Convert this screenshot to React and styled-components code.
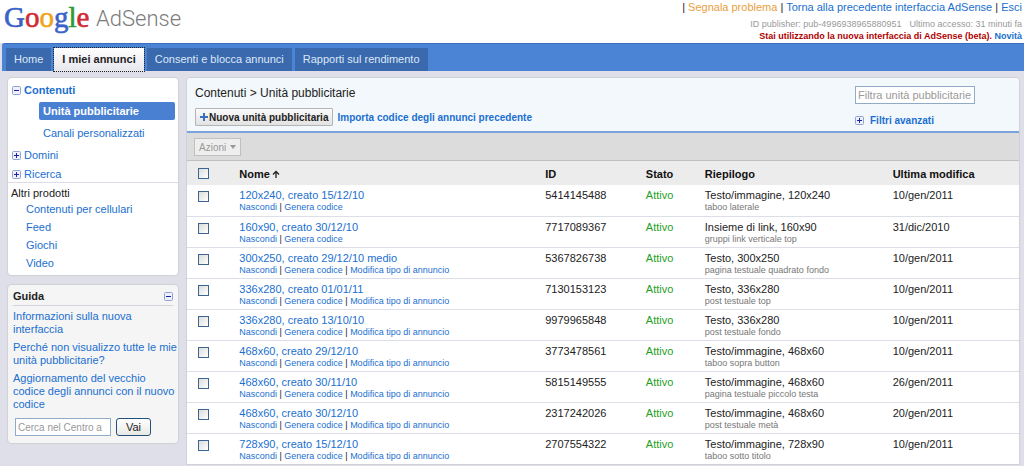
import React, { useState } from 'react';
import styled, { createGlobalStyle } from 'styled-components';

const GlobalStyle = createGlobalStyle`
  * {
    box-sizing: border-box;
  }
  body {
    margin: 0;
    background-color: #dfdfe9;
    color: #222;
    font-family: "Liberation Sans", Arial, sans-serif;
    font-size: 11px;
    line-height: 13px;
  }
  a {
    color: #1a6fd0;
    text-decoration: none;
  }
  button, input {
    font-family: inherit;
    font-size: 11px;
    margin: 0;
  }
`;

const Header = styled.header`
  display: flex;
  justify-content: space-between;
  height: 43px;
  padding: 0 2px 0 4px;
  background-color: #fff;
`;

const Logo = styled.svg`
  display: block;
  flex: none;
`;

const Account = styled.div`
  text-align: right;
  white-space: nowrap;
`;

const AccountLinks = styled.div`
  height: 18px;
  line-height: 15px;
`;

const ReportLink = styled.a`
  color: #e8a040;
`;

const AccountInfo = styled.div`
  color: #999;
  font-size: 9px;
  line-height: 12px;

  span + span {
    margin-left: 8px;
  }
`;

const BetaNote = styled.div`
  color: #b00000;
  font-size: 9px;
  font-weight: bold;
  line-height: 12px;
`;

const Nav = styled.nav`
  display: flex;
  gap: 3px;
  height: 28px;
  margin-left: 2px;
  padding: 4px 4px 0;
  background-color: #4b83d5;
  border-top: 1px solid #3a6fc0;
  border-radius: 3px 0 0 0;
`;

const Tab = styled.a`
  padding: 0 8px;
  line-height: 23px;
  color: ${({ $active }) => ($active ? '#222' : '#dce8f8')};
  font-weight: ${({ $active }) => ($active ? 'bold' : 'normal')};
  background: ${({ $active }) => ($active ? 'linear-gradient(#fff, #e6e6ee)' : '#3b69ad')};
  outline: ${({ $active }) => ($active ? '1px dotted #222' : 'none')};
`;

const Page = styled.div`
  display: flex;
  align-items: flex-start;
  gap: 9px;
  padding: 7px 5px 2px 8px;
`;

const Sidebar = styled.aside`
  flex: none;
  width: 170px;
`;

const Panel = styled.div`
  border-radius: 4px;
  background-color: ${({ $tinted }) => ($tinted ? '#f5f5f5' : '#fff')};
  box-shadow: 0 0 1px 1px #d0d0d8;
  margin-bottom: 10px;
`;

const TreeList = styled.ul`
  margin: 0;
  padding: 3px 3px 0 4px;
  height: 105px;
  list-style: none;
  border-bottom: 1px solid #dcdce4;
`;

const TreeItem = styled.li`
  display: flex;
  align-items: center;
  gap: 3px;
  height: 19px;
  font-weight: ${({ $bold }) => ($bold ? 'bold' : 'normal')};
`;

const SubItem = styled.li`
  margin-left: 27px;
  padding: 3px 0 6px 4px;
`;

const SelectedItem = styled.li`
  margin: 2px 0 4px 27px;
  padding-left: 4px;
  line-height: 18px;
  border-radius: 2px;
  background-color: #4a80d2;

  a {
    color: #fff;
    font-weight: bold;
  }
`;

const Products = styled.div`
  padding: 4px 3px 3px;
`;

const ProductList = styled.ul`
  margin: 0;
  padding: 0 0 0 15px;
  list-style: none;
  line-height: 18px;
`;

const HelpPanel = styled(Panel)`
  padding: 5px 5px 7px;
`;

const HelpTitle = styled.div`
  display: flex;
  justify-content: space-between;
  align-items: center;
  padding-bottom: 2px;
  margin-bottom: 4px;
  font-weight: bold;
  border-bottom: 1px solid #d4d4dc;
`;

const HelpLink = styled.a`
  display: block;
  margin-bottom: 5px;
  white-space: nowrap;
`;

const HelpSearch = styled.form`
  display: flex;
  gap: 5px;
  padding: 2px 3px 0 2px;
`;

const TextInput = styled.input`
  width: ${({ $width }) => $width}px;
  height: 18px;
  padding: 0 2px;
  border: 1px solid #8fabc8;
  background-color: #fff;
  font-size: ${({ $small }) => ($small ? '10px' : '11px')};

  &::placeholder {
    color: #999;
    opacity: 1;
  }
`;

const GoButton = styled.button`
  width: 35px;
  height: 18px;
  padding: 0;
  border: 1px solid #24507c;
  border-radius: 3px;
  color: #222;
  background: linear-gradient(#fff, #e8e8e4);
`;

const Main = styled.main`
  flex: 1;
  min-width: 0;
  border-radius: 4px 4px 0 0;
  background-color: #fff;
  box-shadow: 0 0 1px 1px #d0d0d8;
`;

const MainHead = styled.div`
  display: flex;
  justify-content: space-between;
  height: 55px;
  padding: 8px 45px 0 8px;
  border-radius: 4px 4px 0 0;
  border-bottom: 2px solid #7aa3dc;
  background-color: #f3f8fc;
`;

const Breadcrumb = styled.h1`
  margin: 0 0 8px;
  font-size: 12px;
  font-weight: normal;
  line-height: 14px;
`;

const CreateRow = styled.div`
  display: flex;
  align-items: center;
  gap: 4px;
  font-size: 10px;
  font-weight: bold;
`;

const CreateButton = styled.button`
  display: flex;
  align-items: center;
  gap: 1px;
  height: 18px;
  padding: 0 4px;
  border: 1px solid #b4b4b4;
  border-radius: 1px;
  color: #222;
  font-size: 10px;
  font-weight: bold;
  background: linear-gradient(#fbfbfb, #e2e2e2);
`;

const Filters = styled.div`
  width: 119px;
`;

const AdvancedFilters = styled.a`
  display: flex;
  align-items: center;
  gap: 6px;
  margin-top: 10px;
  font-size: 10px;
  font-weight: bold;
`;

const Toolbar = styled.div`
  height: 28px;
  padding: 5px 7px;
  background-color: #dcdcdc;
  border-bottom: 1px solid #c0c0c4;
`;

const ActionsButton = styled.button`
  display: flex;
  align-items: center;
  gap: 4px;
  height: 18px;
  padding: 0 4px;
  border: 1px solid #c0c0c0;
  color: #999;
  font-size: 10px;
  background-color: #eee;
`;

const UnitTable = styled.table`
  width: 100%;
  table-layout: fixed;
  border-collapse: collapse;
  text-align: left;
`;

const HeadCell = styled.th`
  width: ${({ $width }) => $width};
  height: 24px;
  padding: 2px 0 0;
  color: #111;
  background-color: #ececec;
`;

const UnitRow = styled.tr`
  height: 31px;

  & + & {
    border-top: 1px solid #dcdfe8;
  }
`;

const Cell = styled.td`
  padding: 4px 0 0;
  vertical-align: top;
  white-space: nowrap;
`;

const Status = styled.span`
  color: #1fa01f;
`;

const SmallLine = styled.div`
  font-size: 9px;
  line-height: 10px;
  color: ${({ $muted }) => ($muted ? '#777' : '#222')};
`;

const Checkbox = styled.input`
  appearance: none;
  display: block;
  width: 11px;
  height: 11px;
  margin: ${({ $head }) => ($head ? '0 0 2px 11px' : '2px 0 0 11px')};
  border: 1px solid #3c6590;
  background: linear-gradient(135deg, #dcdcd8, #fff);

  &:checked {
    background: #3c6590;
  }
`;

const treeIcon = (path) => (
  <svg width="9" height="9" viewBox="0 0 9 9" aria-hidden="true">
    <rect x="0.5" y="0.5" width="8" height="8" rx="1" fill="#eef0fa" stroke="#8fa4d0" />
    <path d={path} stroke="#2020b0" />
  </svg>
);

const PlusIcon = () => treeIcon('M2 4.5h5M4.5 2v5');
const MinusIcon = () => treeIcon('M2 4.5h5');

const GOOGLE = [
  ['G', '#3a62c8'],
  ['o', '#d02a35'],
  ['o', '#eda51c'],
  ['g', '#3a62c8'],
  ['l', '#2f9a3c'],
  ['e', '#d02a35'],
];

const COLUMNS = [
  ['Nome', '36.8%'],
  ['ID', '12.1%'],
  ['Stato', '7.1%'],
  ['Riepilogo', '22.6%'],
  ['Ultima modifica', '15.2%'],
];

const UNITS = [
  { name: '120x240, creato 15/12/10', id: '5414145488', type: 'Testo/immagine, 120x240', note: 'taboo laterale', date: '10/gen/2011', link: true },
  { name: '160x90, creato 30/12/10', id: '7717089367', type: 'Insieme di link, 160x90', note: 'gruppi link verticale top', date: '31/dic/2010', link: true },
  { name: '300x250, creato 29/12/10 medio', id: '5367826738', type: 'Testo, 300x250', note: 'pagina testuale quadrato fondo', date: '10/gen/2011' },
  { name: '336x280, creato 01/01/11', id: '7130153123', type: 'Testo, 336x280', note: 'post testuale top', date: '10/gen/2011' },
  { name: '336x280, creato 13/10/10', id: '9979965848', type: 'Testo, 336x280', note: 'post testuale fondo', date: '10/gen/2011' },
  { name: '468x60, creato 29/12/10', id: '3773478561', type: 'Testo/immagine, 468x60', note: 'taboo sopra button', date: '10/gen/2011' },
  { name: '468x60, creato 30/11/10', id: '5815149555', type: 'Testo/immagine, 468x60', note: 'pagina testuale piccolo testa', date: '26/gen/2011' },
  { name: '468x60, creato 30/12/10', id: '2317242026', type: 'Testo/immagine, 468x60', note: 'post testuale metà', date: '20/gen/2011' },
  { name: '728x90, creato 15/12/10', id: '2707554322', type: 'Testo/immagine, 728x90', note: 'taboo sotto titolo', date: '10/gen/2011' },
];

const App = () => {
  const [selected, setSelected] = useState([]);

  const toggle = (id) => {
    setSelected((prev) => (prev.includes(id) ? prev.filter((s) => s !== id) : [...prev, id]));
  };

  const toggleAll = () => {
    setSelected((prev) => (prev.length === UNITS.length ? [] : UNITS.map((u) => u.id)));
  };

  return (
    <>
      <GlobalStyle />
      <Header>
        <Logo width="190" height="40" role="img" aria-label="Google AdSense">
          <text x="0" y="27" fontFamily="Liberation Serif, serif" fontSize="29">
            {GOOGLE.map(([letter, color], i) => (
              <tspan key={i} fill={color} stroke={color} strokeWidth="0.6">{letter}</tspan>
            ))}
          </text>
          <text x="92" y="26" fontFamily="Roboto, sans-serif" fontSize="22" fontWeight="300" fill="#7c7c7c">
            AdSense
          </text>
        </Logo>
        <Account>
          <AccountLinks>
            | <ReportLink href="#">Segnala problema</ReportLink> |{' '}
            <a href="#">Torna alla precedente interfaccia AdSense</a> | <a href="#">Esci</a>
          </AccountLinks>
          <AccountInfo>
            <span>ID publisher: pub-4996938965880951</span>
            <span>Ultimo accesso: 31 minuti fa</span>
          </AccountInfo>
          <BetaNote>
            Stai utilizzando la nuova interfaccia di AdSense (beta). <a href="#">Novità</a>
          </BetaNote>
        </Account>
      </Header>
      <Nav>
        <Tab href="#">Home</Tab>
        <Tab href="#" $active>I miei annunci</Tab>
        <Tab href="#">Consenti e blocca annunci</Tab>
        <Tab href="#">Rapporti sul rendimento</Tab>
      </Nav>
      <Page>
        <Sidebar>
          <Panel>
            <TreeList>
              <TreeItem $bold><MinusIcon /><a href="#">Contenuti</a></TreeItem>
              <SelectedItem><a href="#">Unità pubblicitarie</a></SelectedItem>
              <SubItem><a href="#">Canali personalizzati</a></SubItem>
              <TreeItem><PlusIcon /><a href="#">Domini</a></TreeItem>
              <TreeItem><PlusIcon /><a href="#">Ricerca</a></TreeItem>
            </TreeList>
            <Products>
              Altri prodotti
              <ProductList>
                <li><a href="#">Contenuti per cellulari</a></li>
                <li><a href="#">Feed</a></li>
                <li><a href="#">Giochi</a></li>
                <li><a href="#">Video</a></li>
              </ProductList>
            </Products>
          </Panel>
          <HelpPanel $tinted>
            <HelpTitle>Guida<MinusIcon /></HelpTitle>
            <HelpLink href="#">Informazioni sulla nuova<br />interfaccia</HelpLink>
            <HelpLink href="#">Perché non visualizzo tutte le mie<br />unità pubblicitarie?</HelpLink>
            <HelpLink href="#">Aggiornamento del vecchio<br />codice degli annunci con il nuovo<br />codice</HelpLink>
            <HelpSearch onSubmit={(e) => e.preventDefault()}>
              <TextInput $width={96} $small aria-label="Cerca" placeholder="Cerca nel Centro a" />
              <GoButton type="submit">Vai</GoButton>
            </HelpSearch>
          </HelpPanel>
        </Sidebar>
        <Main>
          <MainHead>
            <div>
              <Breadcrumb>Contenuti &gt; Unità pubblicitarie</Breadcrumb>
              <CreateRow>
                <CreateButton type="button">
                  <svg width="8" height="8" viewBox="0 0 8 8" aria-hidden="true">
                    <path d="M0 4h8M4 0v8" stroke="#3a70c0" strokeWidth="2" />
                  </svg>
                  Nuova unità pubblicitaria
                </CreateButton>
                <a href="#">Importa codice degli annunci precedente</a>
              </CreateRow>
            </div>
            <Filters>
              <TextInput $width={120} aria-label="Filtra" placeholder="Filtra unità pubblicitarie" />
              <AdvancedFilters href="#"><PlusIcon />Filtri avanzati</AdvancedFilters>
            </Filters>
          </MainHead>
          <Toolbar>
            <ActionsButton type="button">
              Azioni
              <svg width="6" height="4" viewBox="0 0 6 4" aria-hidden="true">
                <path d="M0 0h6L3 4z" fill="#999" />
              </svg>
            </ActionsButton>
          </Toolbar>
          <UnitTable>
            <thead>
              <tr>
                <HeadCell $width="6.3%">
                  <Checkbox
                    $head
                    type="checkbox"
                    aria-label="Seleziona tutto"
                    checked={selected.length === UNITS.length}
                    onChange={toggleAll}
                  />
                </HeadCell>
                {COLUMNS.map(([label, width], i) => (
                  <HeadCell key={label} $width={width}>
                    {label}
                    {i === 0 && (
                      <svg width="10" height="8" viewBox="0 0 10 8" aria-hidden="true">
                        <path d="M6 8V2M3 4.5L6 1.5L9 4.5" fill="none" stroke="#222" strokeWidth="1.3" />
                      </svg>
                    )}
                  </HeadCell>
                ))}
              </tr>
            </thead>
            <tbody>
              {UNITS.map((unit) => (
                <UnitRow key={unit.id}>
                  <Cell>
                    <Checkbox
                      type="checkbox"
                      aria-label={unit.name}
                      checked={selected.includes(unit.id)}
                      onChange={() => toggle(unit.id)}
                    />
                  </Cell>
                  <Cell>
                    <a href="#">{unit.name}</a>
                    <SmallLine>
                      <a href="#">Nascondi</a> | <a href="#">Genera codice</a>
                      {!unit.link && <> | <a href="#">Modifica tipo di annuncio</a></>}
                    </SmallLine>
                  </Cell>
                  <Cell>{unit.id}</Cell>
                  <Cell><Status>Attivo</Status></Cell>
                  <Cell>
                    {unit.type}
                    <SmallLine $muted>{unit.note}</SmallLine>
                  </Cell>
                  <Cell>{unit.date}</Cell>
                </UnitRow>
              ))}
            </tbody>
          </UnitTable>
        </Main>
      </Page>
    </>
  );
};

export default App;
